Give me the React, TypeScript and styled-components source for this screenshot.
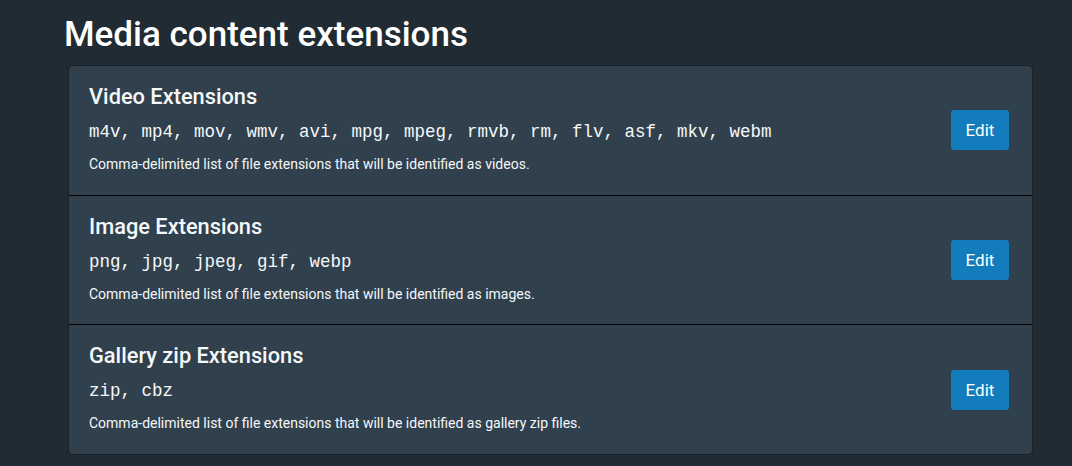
import React from "react";
import styled, { createGlobalStyle } from "styled-components";

const Global = createGlobalStyle`
  html, body { margin: 0; padding: 0; }
  body {
    background: #202b33;
    color: #f5f8fa;
    font-family: Roboto, "Noto Sans", sans-serif;
    width: 1072px;
    height: 466px;
    overflow: hidden;
  }
`;

const Page = styled.div`
  padding: 14px 40px 0 64px;
  display: flex;
  flex-direction: column;
`;

const Heading = styled.h1`
  margin: 0 0 10px 0;
  font-size: 35px;
  font-weight: 500;
  line-height: 42px;
  color: #ffffff;
`;

const Card = styled.div`
  margin-left: 5px;
  width: 963px;
  height: 388px;
  background: #30404d;
  border-radius: 4px;
  box-shadow: 0 0 0 1px rgba(16, 22, 26, 0.4);
  display: flex;
  flex-direction: column;
`;

const Row = styled.div`
  flex: 1;
  display: flex;
  align-items: flex-start;
  justify-content: space-between;
  padding: 18px 23px 0 20px;
  & + & {
    border-top: 1px solid #000;
  }
`;

const Info = styled.div`
  display: flex;
  flex-direction: column;
`;

const Title = styled.h3`
  margin: 0 0 10px 0;
  font-size: 21.8px;
  font-weight: 500;
  line-height: 26px;
  color: #f5f8fa;
`;

const Value = styled.div`
  font-family: "Liberation Mono", monospace;
  font-size: 17.5px;
  line-height: 24px;
  color: #f5f8fa;
  margin-bottom: 10px;
`;

const Desc = styled.div`
  font-size: 14px;
  line-height: 20px;
  color: #f5f8fa;
`;

const EditButton = styled.button`
  align-self: center;
  margin-top: -18px;
  background: #137cbd;
  border: none;
  border-radius: 3px;
  color: #fff;
  font-family: Roboto, sans-serif;
  font-size: 17px;
  width: 58px;
  height: 40px;
  padding: 0;
  cursor: pointer;
`;

const items = [
  {
    title: "Video Extensions",
    value: "m4v, mp4, mov, wmv, avi, mpg, mpeg, rmvb, rm, flv, asf, mkv, webm",
    desc: "Comma-delimited list of file extensions that will be identified as videos.",
  },
  {
    title: "Image Extensions",
    value: "png, jpg, jpeg, gif, webp",
    desc: "Comma-delimited list of file extensions that will be identified as images.",
  },
  {
    title: "Gallery zip Extensions",
    value: "zip, cbz",
    desc: "Comma-delimited list of file extensions that will be identified as gallery zip files.",
  },
];

export default function App() {
  return (
    <>
      <Global />
      <Page>
        <Heading>Media content extensions</Heading>
        <Card>
          {items.map((it) => (
            <Row key={it.title}>
              <Info>
                <Title>{it.title}</Title>
                <Value>{it.value}</Value>
                <Desc>{it.desc}</Desc>
              </Info>
              <EditButton>Edit</EditButton>
            </Row>
          ))}
        </Card>
      </Page>
    </>
  );
}
